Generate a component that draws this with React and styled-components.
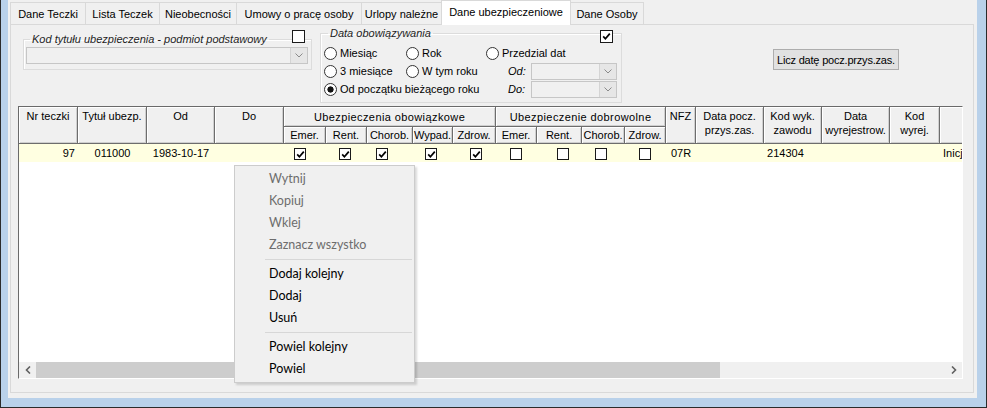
import styled, { createGlobalStyle } from 'styled-components';

const TABS = [
  { label: 'Dane Teczki', width: 76 },
  { label: 'Lista Teczek', width: 75 },
  { label: 'Nieobecności', width: 78 },
  { label: 'Umowy o pracę osoby', width: 126 },
  { label: 'Urlopy należne', width: 81 },
  { label: 'Dane ubezpieczeniowe', width: 130, active: true },
  { label: 'Dane Osoby', width: 74 },
];

const COLS = [59, 69, 68, 69, 42, 41, 46, 40, 43, 41, 45, 43, 41, 30, 68, 58, 68, 50, 80];

const SUB_HEADS = ['Emer.', 'Rent.', 'Chorob.', 'Wypad.', 'Zdrow.', 'Emer.', 'Rent.', 'Chorob.', 'Zdrow.'];

// checked state + left offset of the box inside its column
const FLAGS = [
  { on: true, x: 10 },
  { on: true, x: 13 },
  { on: true, x: 9 },
  { on: true, x: 12 },
  { on: true, x: 17 },
  { on: false, x: 14 },
  { on: false, x: 20 },
  { on: false, x: 13 },
  { on: false, x: 14 },
];

const MENU = [
  { label: 'Wytnij', disabled: true },
  { label: 'Kopiuj', disabled: true },
  { label: 'Wklej', disabled: true },
  { label: 'Zaznacz wszystko', disabled: true },
  { sep: true },
  { label: 'Dodaj kolejny' },
  { label: 'Dodaj' },
  { label: 'Usuń' },
  { sep: true },
  { label: 'Powiel kolejny' },
  { label: 'Powiel' },
];

const GlobalStyle = createGlobalStyle`
  body {
    margin: 0;
    font-family: "Liberation Sans", Arial, sans-serif;
    font-size: 11px;
    color: #000;
  }
`;

const CheckMark = () => (
  <svg width="9" height="9" viewBox="0 0 9 9">
    <path d="M1.2 4.4 L3.4 6.8 L7.8 1.6" fill="none" stroke="#000" strokeWidth="1.7" />
  </svg>
);

const Chevron = () => (
  <svg width="8" height="5" viewBox="0 0 8 5">
    <polyline points="0.5,0.5 4,4 7.5,0.5" fill="none" stroke="#8a8a8a" strokeWidth="1" />
  </svg>
);

const Arrow = ({ dir }) => (
  <svg width="6" height="8" viewBox="0 0 6 8">
    <polyline
      points={dir === 'left' ? '5,0.5 1.5,4 5,7.5' : '1,0.5 4.5,4 1,7.5'}
      fill="none"
      stroke="#606060"
      strokeWidth="1.6"
    />
  </svg>
);

const Combo = ({ width }) => (
  <ComboBox style={{ width }}>
    <ComboButton>
      <Chevron />
    </ComboButton>
  </ComboBox>
);

const App = () => {
  return (
    <>
      <GlobalStyle />
      <Frame>
        <Client>
          <TabStrip>
            {TABS.map((t) => (
              <Tab key={t.label} $w={t.width} $active={t.active}>
                {t.label}
              </Tab>
            ))}
          </TabStrip>
          <Panel>
            <TopArea>
              <GroupWrap $ml={12} $mt={8}>
                <Group $w={289} $h={37} $pad="0 3px 0 2px">
                  <Legend>Kod tytułu ubezpieczenia - podmiot podstawowy</Legend>
                  <ComboRow>
                    <Combo width={282} />
                  </ComboRow>
                </Group>
                <GroupCheck $top={-3} $right={7}>
                  <Box />
                </GroupCheck>
              </GroupWrap>

              <GroupWrap $ml={8} $mt={2}>
                <Group $w={302} $h={76} $pad="0 3px 0 3px">
                  <Legend>Data obowiązywania</Legend>
                  <RadioGrid>
                    <Option><Radio />Miesiąc</Option>
                    <Option><Radio />Rok</Option>
                    <Option><Radio />Przedzial dat</Option>
                    <Option><Radio />3 miesiące</Option>
                    <Option><Radio />W tym roku</Option>
                    <DateField>
                      <DateLabel>Od:</DateLabel>
                      <Combo width={86} />
                    </DateField>
                    <Option $span={2}><Radio $on />Od początku bieżącego roku</Option>
                    <DateField>
                      <DateLabel>Do:</DateLabel>
                      <Combo width={86} />
                    </DateField>
                  </RadioGrid>
                </Group>
                <GroupCheck $top={3} $right={9}>
                  <Box><CheckMark /></Box>
                </GroupCheck>
              </GroupWrap>

              <Button>Licz datę pocz.przys.zas.</Button>
            </TopArea>

            <GridBox>
              <Viewport>
                <Table>
                  <colgroup>
                    {COLS.map((w, i) => (
                      <col key={i} style={{ width: w }} />
                    ))}
                  </colgroup>
                  <thead>
                    <tr>
                      <Head rowSpan={2}>Nr teczki</Head>
                      <Head rowSpan={2}>Tytuł ubezp.</Head>
                      <Head rowSpan={2}>Od</Head>
                      <Head rowSpan={2}>Do</Head>
                      <GroupHead colSpan={5}>Ubezpieczenia obowiązkowe</GroupHead>
                      <GroupHead colSpan={4}>Ubezpieczenie dobrowolne</GroupHead>
                      <Head rowSpan={2}>NFZ</Head>
                      <Head rowSpan={2}>Data pocz.<br />przys.zas.</Head>
                      <Head rowSpan={2}>Kod wyk.<br />zawodu</Head>
                      <Head rowSpan={2}>Data<br />wyrejestrow.</Head>
                      <Head rowSpan={2}>Kod<br />wyrej.</Head>
                      <Head rowSpan={2}></Head>
                    </tr>
                    <tr>
                      {SUB_HEADS.map((h, i) => (
                        <SubHead key={i}>{h}</SubHead>
                      ))}
                    </tr>
                  </thead>
                  <tbody>
                    <DataRow>
                      <Cell $align="right">97</Cell>
                      <Cell $align="center">011000</Cell>
                      <Cell $align="center">1983-10-17</Cell>
                      <Cell />
                      {FLAGS.map((f, i) => (
                        <FlagCell key={i} $x={f.x}>
                          <SmallBox>{f.on ? <CheckMark /> : null}</SmallBox>
                        </FlagCell>
                      ))}
                      <Cell $align="center">07R</Cell>
                      <Cell />
                      <Cell>214304</Cell>
                      <Cell />
                      <Cell />
                      <Cell>Inicj</Cell>
                    </DataRow>
                  </tbody>
                </Table>
              </Viewport>
              <HScroll>
                <ScrollArrow><Arrow dir="left" /></ScrollArrow>
                <Track>
                  <Thumb style={{ width: 684 }} />
                </Track>
                <ScrollArrow><Arrow dir="right" /></ScrollArrow>
              </HScroll>
            </GridBox>
          </Panel>
        </Client>

        <Menu>
          {MENU.map((m, i) =>
            m.sep ? (
              <MenuSep key={i} />
            ) : (
              <MenuItem key={i} $disabled={m.disabled}>
                {m.label}
              </MenuItem>
            )
          )}
        </Menu>
      </Frame>
    </>
  );
};

const Frame = styled.div`
position: relative;
box-sizing: border-box;
width: 987px;
height: 408px;
background: #b9d1ea;
border: 1px solid #2b2b2b;
border-top: none;
padding: 0 9px 9px 7px;
display: flex;
`;

const Client = styled.div`
flex: 1;
background: #f0f0f0;
padding: 0 3px 5px 2px;
display: flex;
flex-direction: column;
`;

const TabStrip = styled.div`
display: flex;
align-items: flex-end;
height: 24px;
flex-shrink: 0;
`;

const Tab = styled.div`
position: relative;
box-sizing: border-box;
width: ${(p) => p.$w}px;
height: ${(p) => (p.$active ? 25 : 22)}px;
margin-right: -1px;
margin-bottom: ${(p) => (p.$active ? -1 : 0)}px;
border: 1px solid #d9d9d9;
border-bottom: none;
background: ${(p) => (p.$active ? '#ffffff' : '#f0f0f0')};
z-index: ${(p) => (p.$active ? 2 : 1)};
display: flex;
align-items: center;
justify-content: center;
padding-bottom: ${(p) => (p.$active ? 3 : 0)}px;
white-space: nowrap;
font-size: 11px;
`;

const Panel = styled.div`
flex: 1;
border: 1px solid #d9d9d9;
background: #f0f0f0;
display: flex;
flex-direction: column;
`;

const TopArea = styled.div`
display: flex;
align-items: flex-start;
height: 81px;
flex-shrink: 0;
`;

const GroupWrap = styled.div`
position: relative;
margin-left: ${(p) => p.$ml}px;
margin-top: ${(p) => p.$mt}px;
`;

const Group = styled.fieldset`
box-sizing: border-box;
width: ${(p) => p.$w}px;
height: ${(p) => p.$h}px;
margin: 0;
padding: ${(p) => p.$pad};
border: 1px solid #dcdcdc;
box-shadow: inset 1px 1px 0 #ffffff;
min-width: 0;
`;

const Legend = styled.legend`
margin-left: 4px;
padding: 0 2px;
font-style: italic;
line-height: 13px;
color: #1e1e1e;
`;

const GroupCheck = styled.div`
position: absolute;
top: ${(p) => p.$top}px;
right: ${(p) => p.$right}px;
`;

const Box = styled.span`
box-sizing: border-box;
display: flex;
align-items: center;
justify-content: center;
width: 13px;
height: 13px;
border: 1px solid #1a1a1a;
background: #fff;
`;

const SmallBox = styled(Box)`
display: inline-flex;
vertical-align: middle;
width: 12px;
height: 12px;
`;

const ComboRow = styled.div`
margin-top: 1px;
display: flex;
`;

const ComboBox = styled.div`
box-sizing: border-box;
height: 17px;
border: 1px solid #c6c6c6;
background: #f0f0f0;
display: flex;
justify-content: flex-end;
`;

const ComboButton = styled.div`
width: 16px;
border-left: 1px solid #d4d4d4;
background: #e6e6e6;
display: flex;
align-items: center;
justify-content: center;
`;

const RadioGrid = styled.div`
margin-top: 4px;
display: grid;
grid-template-columns: 82px 80px 1fr;
grid-auto-rows: 18px;
align-items: center;
`;

const Option = styled.label`
display: flex;
align-items: center;
gap: 3px;
white-space: nowrap;
grid-column: span ${(p) => p.$span || 1};
`;

const Radio = styled.span`
box-sizing: border-box;
width: 13px;
height: 13px;
border-radius: 50%;
border: 1px solid #333;
background: ${(p) =>
  p.$on ? 'radial-gradient(circle, #111 0 2.8px, #fff 3.4px)' : '#fff'};
flex-shrink: 0;
`;

const DateField = styled.div`
display: flex;
align-items: center;
padding-left: 22px;
`;

const DateLabel = styled.span`
width: 23px;
font-style: italic;
`;

const Button = styled.button`
margin-left: 151px;
margin-top: 24px;
width: 126px;
height: 21px;
padding: 0;
border: 1px solid #adadad;
background: #e1e1e1;
font-family: "Liberation Sans", Arial, sans-serif;
font-size: 11px;
letter-spacing: -0.2px;
color: #000;
`;

const GridBox = styled.div`
box-sizing: border-box;
margin-left: 7px;
width: 945px;
height: 273px;
border: 1px solid;
border-color: #6a6a6a #ffffff #ffffff #6a6a6a;
display: flex;
flex-direction: column;
`;

const Viewport = styled.div`
flex: 1;
overflow: hidden;
background: #fff;
`;

const Table = styled.table`
table-layout: fixed;
width: 1001px;
border-collapse: separate;
border-spacing: 0;
font-size: 11px;
`;

const Head = styled.th`
box-sizing: border-box;
padding: 2px 0 0;
height: 37px;
vertical-align: top;
text-align: center;
font-weight: normal;
line-height: 14px;
white-space: nowrap;
overflow: hidden;
background: #f0f0f0;
border-right: 1px solid #6d6d6d;
border-bottom: 1px solid #6d6d6d;
box-shadow: inset 1px 1px 0 #ffffff, inset -1px -1px 0 #cfcfcf;
`;

const GroupHead = styled(Head)`
height: 20px;
padding: 3px 0 0;
letter-spacing: 0.4px;
`;

const SubHead = styled(Head)`
height: 17px;
padding: 1px 0 0;
`;

const DataRow = styled.tr`
background: #ffffe1;
`;

const Cell = styled.td`
box-sizing: border-box;
height: 18px;
padding: 0 3px;
text-align: ${(p) => p.$align || 'left'};
white-space: nowrap;
overflow: hidden;
line-height: 18px;
`;

const FlagCell = styled(Cell)`
padding: 0 0 0 ${(p) => p.$x}px;
`;

const HScroll = styled.div`
height: 16px;
display: flex;
background: #f0f0f0;
`;

const ScrollArrow = styled.div`
width: 17px;
display: flex;
align-items: center;
justify-content: center;
`;

const Track = styled.div`
flex: 1;
display: flex;
`;

const Thumb = styled.div`
background: #cdcdcd;
`;

const Menu = styled.div`
position: absolute;
left: 233px;
top: 165px;
box-sizing: border-box;
width: 181px;
padding: 2px 2px;
background: #f0f0f0;
border: 1px solid #cccccc;
box-shadow: 2px 2px 2px rgba(0, 0, 0, 0.15);
font-family: Lato, "Liberation Sans", sans-serif;
font-size: 12.5px;
z-index: 5;
`;

const MenuItem = styled.div`
height: 22px;
line-height: 22px;
padding-left: 32px;
color: ${(p) => (p.$disabled ? '#6d6d6d' : '#000')};
`;

const MenuSep = styled.div`
height: 7px;
margin-left: 28px;
display: flex;
align-items: center;
&::after {
  content: '';
  flex: 1;
  border-top: 1px solid #d7d7d7;
}
`;

export default App;
